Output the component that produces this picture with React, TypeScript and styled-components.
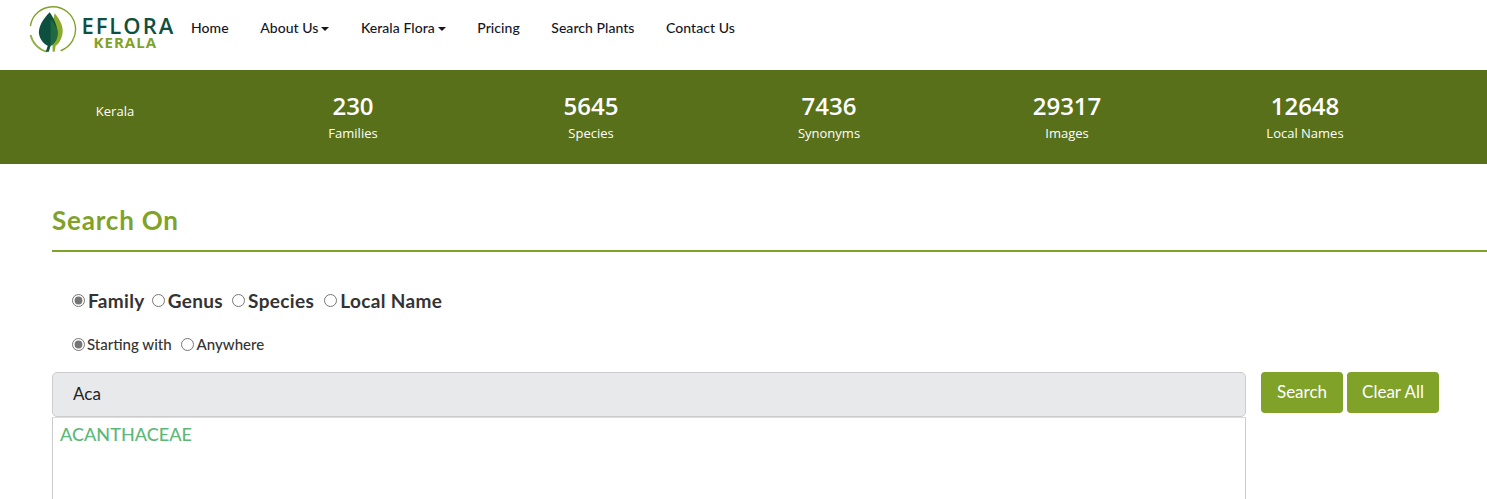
import React from "react";
import styled, { createGlobalStyle } from "styled-components";

const GlobalStyle = createGlobalStyle`
  html, body {
    margin: 0;
    padding: 0;
    overflow: hidden;
    background: #fff;
    font-family: "Lato", "Open Sans", sans-serif;
  }
  * { box-sizing: border-box; }
`;

const Header = styled.header`
  display: flex;
  align-items: flex-start;
  height: 70px;
  padding: 5px 0 0 28px;
`;

const Brand = styled.a`
  display: flex;
  width: 147.25px;
  flex-shrink: 0;
`;

const BrandText = styled.div`
  display: flex;
  flex-direction: column;
  align-items: center;
  margin-left: 4px;
  padding-top: 9px;
`;

const BrandName = styled.span`
  font-family: "Open Sans", sans-serif;
  font-size: 22px;
  line-height: 22px;
  font-weight: 600;
  letter-spacing: 2px;
  color: #0e5040;
`;

const BrandSub = styled.span`
  margin-right: 6px;
  font-family: "Open Sans", sans-serif;
  font-size: 15px;
  line-height: 12px;
  font-weight: 700;
  letter-spacing: 1px;
  color: #7fa228;
`;

const Nav = styled.nav`
  display: flex;
  padding-top: 13px;
`;

const NavLink = styled.a`
  display: flex;
  align-items: center;
  gap: 3px;
  padding: 0 15.75px;
  font-size: 14px;
  line-height: 20px;
  font-weight: 500;
  letter-spacing: 0.05px;
  color: #15151f;
`;

const Caret = styled.i`
  display: inline-block;
  width: 0;
  height: 0;
  margin-top: 1px;
  border-left: 4px solid transparent;
  border-right: 4px solid transparent;
  border-top: 4px solid #15151f;
`;

const StatBand = styled.section`
  display: grid;
  grid-template-columns: 234px repeat(5, 238px);
  height: 94px;
  background: #58701a;
  color: #fff;
  font-family: "Open Sans", sans-serif;
`;

const Stat = styled.div`
  display: flex;
  flex-direction: column;
  align-items: center;
  padding-top: 20px;
`;

const Region = styled.div`
  display: flex;
  justify-content: center;
  padding: 32px 4px 0 0;
  font-size: 13px;
  line-height: 18px;
  color: #fff;
`;

const StatValue = styled.strong`
  margin-bottom: 1px;
  font-size: 24px;
  line-height: 32px;
  font-weight: 600;
`;

const StatLabel = styled.span`
  font-size: 13px;
  line-height: 20px;
`;

const Main = styled.main`
  padding: 40px 0 0 52px;
`;

const Title = styled.h2`
  margin: 0;
  height: 48px;
  border-bottom: 2px solid #7fa228;
  font-size: 26px;
  line-height: 32px;
  font-weight: 700;
  letter-spacing: 0.8px;
  color: #7fa228;
`;

const RadioRow = styled.div<{ $big?: boolean }>`
  display: flex;
  align-items: center;
  height: 24px;
  margin: ${(p) => (p.$big ? "36px 0 0 20px" : "20px 0 0 20px")};
  font-size: ${(p) => (p.$big ? "19px" : "15px")};
  font-weight: ${(p) => (p.$big ? 700 : 500)};
  letter-spacing: ${(p) => (p.$big ? "0.35px" : "0")};
  color: #333;
`;

const RadioLabel = styled.label<{ $gap: number }>`
  display: flex;
  align-items: center;
  margin-right: ${(p) => p.$gap}px;
`;

const Radio = styled.input<{ $after: number }>`
  width: 13px;
  height: 13px;
  margin: 0 ${(p) => p.$after}px 0 0;
  accent-color: #757575;
`;

const SearchGrid = styled.div`
  display: flex;
  align-items: flex-start;
  margin-top: 16px;
`;

const Field = styled.div`
  width: 1194px;
`;

const Input = styled.input`
  display: block;
  width: 100%;
  height: 45px;
  padding: 0 20px 2px;
  border: 1px solid #ccc;
  border-radius: 5px;
  background: #e8e9eb;
  font-family: inherit;
  font-size: 17px;
  color: #222;
  outline: none;
`;

const Results = styled.div`
  height: 180px;
  padding: 4px 7px;
  border: 1px solid #ccc;
  border-top-color: #ddd;
  font-size: 18px;
  line-height: 24px;
  font-weight: 500;
  letter-spacing: 0.05px;
  color: #5cb87a;
`;

const Actions = styled.div`
  display: flex;
  gap: 4px;
  margin-left: 15px;
`;

const Button = styled.button<{ $w: number }>`
  width: ${(p) => p.$w}px;
  height: 41px;
  padding: 0 0 2px;
  border: 0;
  border-radius: 4px;
  background: #80a229;
  font-family: inherit;
  font-size: 17px;
  color: #fff;
`;

const Logo = () => (
  <svg width="50" height="52" viewBox="0 0 50 52">
    <path d="M2.4 21A23 23 0 1 1 33 46" fill="none" stroke="#7fa228" strokeWidth="1.4" />
    <path d="M2.6 30A23 23 0 0 0 19 47" fill="none" stroke="#8fae45" strokeWidth="1.8" />
    <path d="M27 8C32 14 36 21 35 28C34 35 31 39 28 41L27 47H25L24 20Z" fill="#8bab2c" />
    <path d="M22 7C15 14 11 21 11 28C12 35 16 39 20 41L18 47H21L23 41C27 39 30 34 30 28C30 21 26 13 22 7Z" fill="#0e5040" />
    <path d="M23 14C27 19 30 23 30 28C30 34 27 38 23 41Z" fill="#1f6a3f" />
  </svg>
);

const stats = [
  { value: "230", label: "Families" },
  { value: "5645", label: "Species" },
  { value: "7436", label: "Synonyms" },
  { value: "29317", label: "Images" },
  { value: "12648", label: "Local Names" },
];

const App = () => {
  return (
    <>
      <GlobalStyle />
      <Header>
        <Brand>
          <Logo />
          <BrandText>
            <BrandName>EFLORA</BrandName>
            <BrandSub>KERALA</BrandSub>
          </BrandText>
        </Brand>
        <Nav>
          <NavLink>Home</NavLink>
          <NavLink>About Us <Caret /></NavLink>
          <NavLink>Kerala Flora <Caret /></NavLink>
          <NavLink>Pricing</NavLink>
          <NavLink>Search Plants</NavLink>
          <NavLink>Contact Us</NavLink>
        </Nav>
      </Header>
      <StatBand>
        <Region>Kerala</Region>
        {stats.map((s) => (
          <Stat key={s.label}>
            <StatValue>{s.value}</StatValue>
            <StatLabel>{s.label}</StatLabel>
          </Stat>
        ))}
      </StatBand>
      <Main>
        <Title>Search On</Title>
        <RadioRow $big>
          <RadioLabel $gap={7}><Radio $after={3} type="radio" name="on" defaultChecked />Family</RadioLabel>
          <RadioLabel $gap={9}><Radio $after={3} type="radio" name="on" />Genus</RadioLabel>
          <RadioLabel $gap={10}><Radio $after={3} type="radio" name="on" />Species</RadioLabel>
          <RadioLabel $gap={0}><Radio $after={3} type="radio" name="on" />Local Name</RadioLabel>
        </RadioRow>
        <RadioRow>
          <RadioLabel $gap={9}><Radio $after={2} type="radio" name="at" defaultChecked />Starting with</RadioLabel>
          <RadioLabel $gap={0}><Radio $after={3} type="radio" name="at" />Anywhere</RadioLabel>
        </RadioRow>
        <SearchGrid>
          <Field>
            <Input defaultValue="Aca" />
            <Results>ACANTHACEAE</Results>
          </Field>
          <Actions>
            <Button $w={82}>Search</Button>
            <Button $w={92}>Clear All</Button>
          </Actions>
        </SearchGrid>
      </Main>
    </>
  );
};

export default App;
